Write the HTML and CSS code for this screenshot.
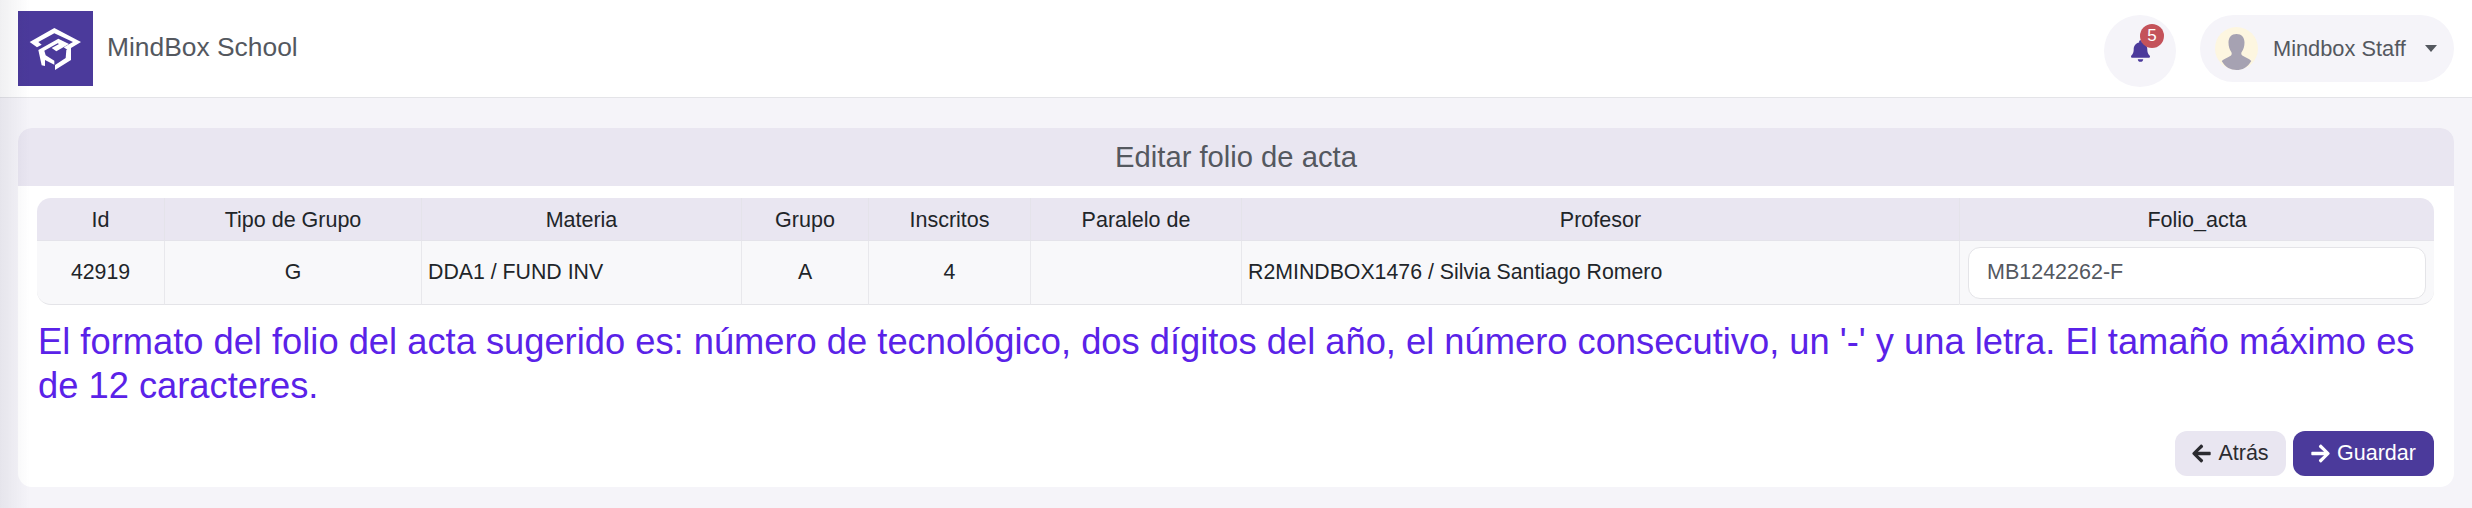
FILE: index.html
```html
<!DOCTYPE html>
<html lang="es">

<head>
	<meta charset="utf-8" />
	<title>Editar folio de acta</title>
	<link rel="stylesheet" href="styles.css">
</head>

<body>
	<div class="side-shadow"></div>
	<header class="topbar">
		<div class="brand-logo">
			<svg viewBox="-21 -33 225 225" width="75" height="75">
				<polygon fill="#fff" points="14,60 88,18 168,60 128,84 116,76 144,60 88,34 40,60 50,68 36,76" />
				<polygon fill="#fff" points="40,84 100,50 132,66 94,88 80,78 102,66 98,64 58,86 62,100 88,116 88,128 60,114 60,132 50,130" />
				<polygon fill="#fff" points="124,84 138,76 138,114 90,144 90,129 122,108" />
			</svg>
		</div>
		<span class="brand-name">MindBox School</span>
		<div class="notify">
			<svg class="notify-bell" viewBox="0 0 448 512" width="19" height="22">
				<path fill="#4b3a9b" d="M224 512c35.32 0 63.97-28.65 63.97-64H160.03c0 35.35 28.65 64 63.97 64zm215.39-149.71c-19.32-20.76-55.47-51.99-55.47-154.29 0-77.7-54.48-139.9-127.94-155.16V32c0-17.67-14.32-32-31.98-32s-31.98 14.33-31.98 32v20.84C118.56 68.1 64.08 130.3 64.08 208c0 102.3-36.15 133.53-55.47 154.29-6 6.45-8.66 14.16-8.61 21.71.11 16.4 12.98 32 32.1 32h383.8c19.12 0 32-15.6 32.1-32 .05-7.55-2.61-15.27-8.61-21.71z" />
			</svg>
			<span class="notify-badge">5</span>
		</div>
		<div class="user-pill">
			<svg class="user-avatar" viewBox="0 0 43 43" width="43" height="43">
				<circle cx="21.5" cy="21.5" r="21.5" fill="#fdf6e0" />
				<path fill="#a6a2b2" d="M21.5 7c5 0 8 3.4 8 8.500 0 4-1 7-2.800 9.500-.7 1-.6 2.800.6 3.600 2.700 1.700 6.700 3 9 5.400C32.400 40.800 27.300 43 21.500 43c-5.900 0-11-2.200-14.800-8.900 2.300-2.400 6.300-3.700 9-5.400 1.200-.8 1.300-2.600.6-3.700-1.800-2.500-2.800-5.500-2.800-9.500C13.500 10.400 16.500 7 21.500 7z" />
			</svg>
			<span class="user-name">Mindbox Staff</span>
			<span class="user-caret"></span>
		</div>
	</header>

	<main class="content">
		<section class="card">
			<h2 class="card-head">Editar folio de acta</h2>
			<div class="card-body">
				<table class="grid">
					<thead>
						<tr>
							<th>Id</th>
							<th>Tipo de Grupo</th>
							<th>Materia</th>
							<th>Grupo</th>
							<th>Inscritos</th>
							<th>Paralelo de</th>
							<th>Profesor</th>
							<th>Folio_acta</th>
						</tr>
					</thead>
					<tbody>
						<tr>
							<td class="center">42919</td>
							<td class="center">G</td>
							<td>DDA1 / FUND INV</td>
							<td class="center">A</td>
							<td class="center">4</td>
							<td></td>
							<td>R2MINDBOX1476 / Silvia Santiago Romero</td>
							<td class="folio-cell"><input class="folio-input" type="text" value="MB1242262-F" /></td>
						</tr>
					</tbody>
				</table>
				<p class="hint">El formato del folio del acta sugerido es: número de tecnológico, dos dígitos del año, el número consecutivo, un '-' y una letra. El tamaño máximo es de 12 caracteres.</p>
				<div class="actions">
					<button class="btn btn-back" type="button">
						<svg viewBox="0 0 448 512" width="19" height="21">
							<path fill="#2b2b30" d="M257.500 445.100l-22.200 22.200c-9.400 9.400-24.600 9.400-33.900 0L7 273c-9.400-9.400-9.400-24.600 0-33.900L201.400 44.700c9.400-9.400 24.600-9.400 33.900 0l22.200 22.200c9.500 9.500 9.300 25-.4 34.300L136.600 216H424c13.300 0 24 10.700 24 24v32c0 13.300-10.700 24-24 24H136.600l120.500 114.800c9.800 9.300 10 24.800.4 34.300z" />
						</svg>
						Atrás
					</button>
					<button class="btn btn-save" type="button">
						<svg viewBox="0 0 448 512" width="19" height="21">
							<path fill="#fff" d="M190.500 66.900l22.200-22.200c9.400-9.400 24.600-9.400 33.900 0L441 239c9.400 9.400 9.400 24.600 0 33.900L246.600 467.300c-9.400 9.400-24.600 9.400-33.900 0l-22.200-22.200c-9.500-9.500-9.300-25 .4-34.300L311.400 296H24c-13.300 0-24-10.700-24-24v-32c0-13.300 10.700-24 24-24h287.400L190.900 101.200c-9.800-9.300-10-24.800-.4-34.300z" />
						</svg>
						Guardar
					</button>
				</div>
			</div>
		</section>
	</main>
</body>

</html>
```

FILE: styles.css
```css
* {
	box-sizing: border-box;
}

body {
	margin: 0;
	height: 508px;
	overflow: hidden;
	background-color: #f5f4f9;
	font-family: "Liberation Sans", Arial, sans-serif;
	color: #212529;
}

/* sombra del menu lateral colapsado */
.side-shadow {
	position: fixed;
	top: 0;
	left: 0;
	bottom: 0;
	width: 30px;
	background: linear-gradient(to right, rgba(40, 40, 70, 0.07), rgba(40, 40, 70, 0));
	pointer-events: none;
}

.topbar {
	display: flex;
	align-items: flex-start;
	height: 98px;
	padding: 11px 18px 0;
	background-color: #fff;
	border-bottom: 1px solid #e4e4e8;
}

.brand-logo {
	width: 75px;
	height: 75px;
	background-color: #4b3a9b;
}

.brand-logo svg {
	display: block;
}

.brand-name {
	margin: 21px auto 0 14px;
	font-size: 26.4px;
	line-height: 30px;
	color: #54585f;
}

.notify {
	position: relative;
	display: flex;
	align-items: center;
	justify-content: center;
	width: 72px;
	height: 72px;
	margin: 4px 24px 0 0;
	border-radius: 50%;
	background-color: #f5f4f9;
}

.notify-badge {
	position: absolute;
	top: 9px;
	left: 36px;
	width: 24px;
	height: 24px;
	border-radius: 50%;
	background-color: #c4525a;
	color: #fff;
	font-size: 17px;
	line-height: 24px;
	text-align: center;
}

.user-pill {
	display: flex;
	align-items: center;
	width: 254px;
	height: 67px;
	margin-top: 4px;
	padding: 0 15px;
	border-radius: 34px;
	background-color: #f5f4f9;
}

.user-name {
	margin-left: 15px;
	font-size: 21.8px;
	color: #54585f;
}

.user-caret {
	margin-left: 19px;
	border-top: 7px solid #54585f;
	border-left: 6px solid transparent;
	border-right: 6px solid transparent;
}

.content {
	padding: 30px 18px 0;
}

.card {
	height: 359px;
	border-radius: 14px;
	background-color: #fff;
}

.card-head {
	height: 58px;
	margin: 0;
	border-radius: 14px 14px 0 0;
	background-color: #e9e6f1;
	color: #54585f;
	font-size: 29.2px;
	font-weight: normal;
	line-height: 58px;
	text-align: center;
}

.card-body {
	padding: 12px 20px 12px 19px;
}

.grid {
	width: 2397px;
	table-layout: fixed;
	border-collapse: separate;
	border-spacing: 0;
	font-size: 21.5px;
}

.grid th {
	height: 43px;
	padding: 2px 0 0;
	background-color: #e9e6f1;
	border-left: 1px solid #e4e3ea;
	border-bottom: 1px solid #e4e3ea;
	font-weight: normal;
}

.grid td {
	height: 64px;
	padding: 0 6px;
	background-color: #f8f8fa;
	border-left: 1px solid #e8e8ec;
	border-bottom: 1px solid #e4e4e8;
	font-size: 21.3px;
}

.grid th:first-child,
.grid td:first-child {
	border-left: 0;
}

.grid th:first-child { border-top-left-radius: 14px; }
.grid th:last-child { border-top-right-radius: 14px; }
.grid td:first-child { border-bottom-left-radius: 14px; }
.grid td:last-child { border-bottom-right-radius: 14px; }

.grid th:nth-child(1) { width: 127px; }
.grid th:nth-child(2) { width: 257px; }
.grid th:nth-child(3) { width: 320px; }
.grid th:nth-child(4) { width: 127px; }
.grid th:nth-child(5) { width: 162px; }
.grid th:nth-child(6) { width: 211px; }
.grid th:nth-child(7) { width: 718px; }
.grid th:nth-child(8) { width: 475px; }

.grid td.center {
	text-align: center;
}

.grid td.folio-cell {
	padding: 0 8px;
}

.folio-input {
	display: block;
	width: 100%;
	height: 52px;
	padding: 0 18px;
	border: 1px solid #e4e4e8;
	border-radius: 12px;
	background-color: #fff;
	color: #54585f;
	font-family: inherit;
	font-size: 21.5px;
}

.hint {
	margin: 15px 0 23px 1px;
	color: #5a22e8;
	font-size: 36.3px;
	line-height: 44px;
}

.actions {
	display: flex;
	justify-content: flex-end;
	gap: 7px;
}

.btn {
	display: flex;
	align-items: center;
	justify-content: center;
	gap: 7px;
	height: 45px;
	border: 0;
	border-radius: 12px;
	font-family: inherit;
	font-size: 21.5px;
}

.btn-back {
	width: 111px;
	background-color: #e9e6f1;
	color: #2b2b30;
}

.btn-save {
	width: 141px;
	background-color: #4b3a9b;
	color: #fff;
}
```
